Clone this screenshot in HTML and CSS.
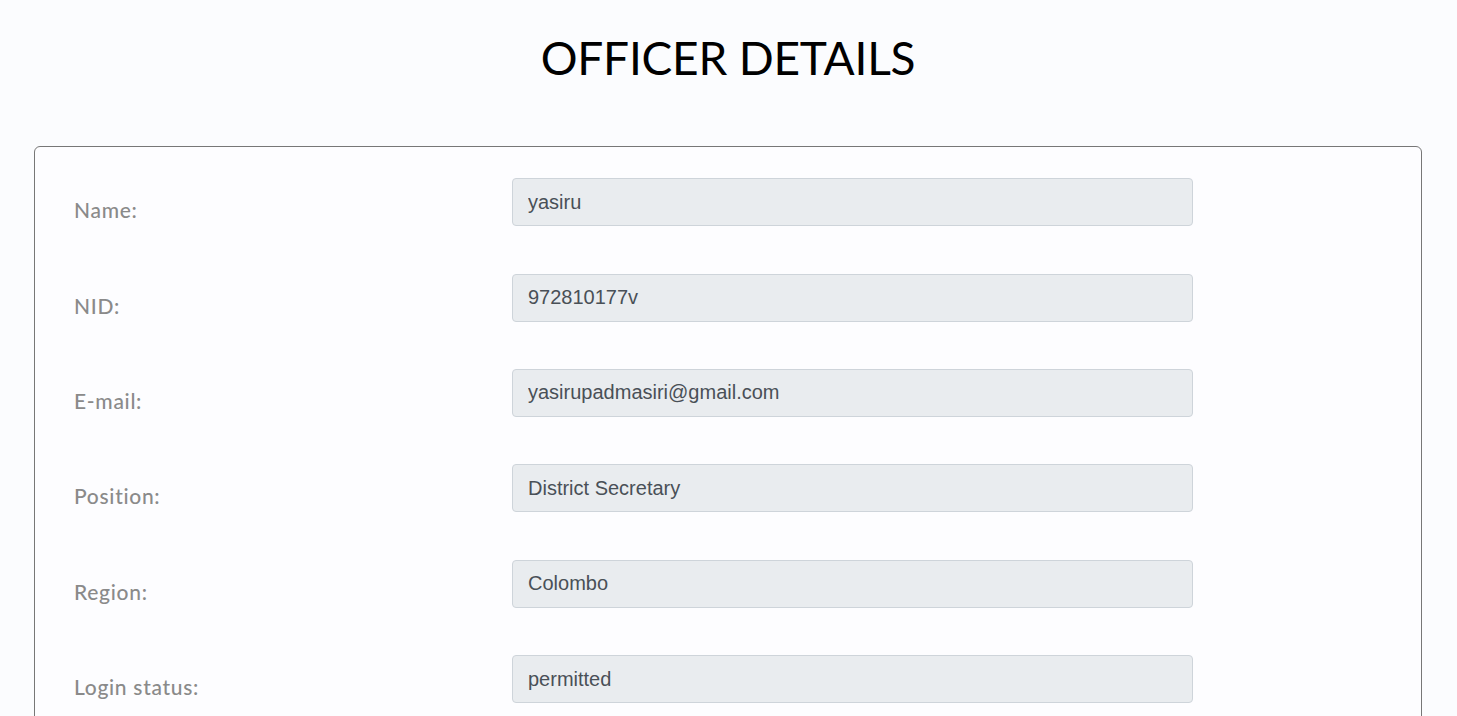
FILE: index.html
```html
<!DOCTYPE html>
<html lang="en">
<head>
<meta charset="utf-8">
<title>Officer Details</title>
<link rel="stylesheet" href="styles.css">
</head>
<body>
<main class="page">
  <h1 class="title">OFFICER DETAILS</h1>
  <section class="card">
    <div class="row">
      <label class="label">Name:</label>
      <input class="field" type="text" value="yasiru" readonly>
    </div>
    <div class="row">
      <label class="label">NID:</label>
      <input class="field" type="text" value="972810177v" readonly>
    </div>
    <div class="row">
      <label class="label">E-mail:</label>
      <input class="field" type="text" value="yasirupadmasiri@gmail.com" readonly>
    </div>
    <div class="row">
      <label class="label">Position:</label>
      <input class="field" type="text" value="District Secretary" readonly>
    </div>
    <div class="row">
      <label class="label">Region:</label>
      <input class="field" type="text" value="Colombo" readonly>
    </div>
    <div class="row">
      <label class="label">Login status:</label>
      <input class="field" type="text" value="permitted" readonly>
    </div>
  </section>
</main>
</body>
</html>
```

FILE: styles.css
```css
html, body {
  margin: 0;
  padding: 0;
  background: #fbfcfe;
}
.page {
  padding: 30px 35px 40px 34px;
}
.title {
  margin: 0 0 61px;
  text-align: center;
  font-family: Lato, "Open Sans", sans-serif;
  font-weight: 400;
  font-size: 46px;
  line-height: 1.2;
  letter-spacing: -0.2px;
  color: #000;
}
.card {
  border: 1px solid #777;
  border-radius: 6px;
  background: #fdfdff;
  padding: 31px 40px 40px 39px;
  display: flex;
  flex-direction: column;
  gap: 47.4px;
}
.row {
  display: grid;
  grid-template-columns: 438px 681px;
  align-items: start;
}
.label {
  padding-top: 20px;
  font-family: Lato, "Open Sans", sans-serif;
  font-weight: 500;
  font-size: 21px;
  line-height: 24px;
  letter-spacing: 0.7px;
  color: #8a8a8a;
}
.field {
  box-sizing: border-box;
  width: 681px;
  height: 48px;
  margin: 0;
  padding: 8px 15px;
  border: 1px solid #ced4da;
  border-radius: 4px;
  background: #e9ecef;
  font-family: "Liberation Sans", Arial, sans-serif;
  font-size: 20px;
  line-height: 1.5;
  color: #495057;
  outline: none;
}
```
